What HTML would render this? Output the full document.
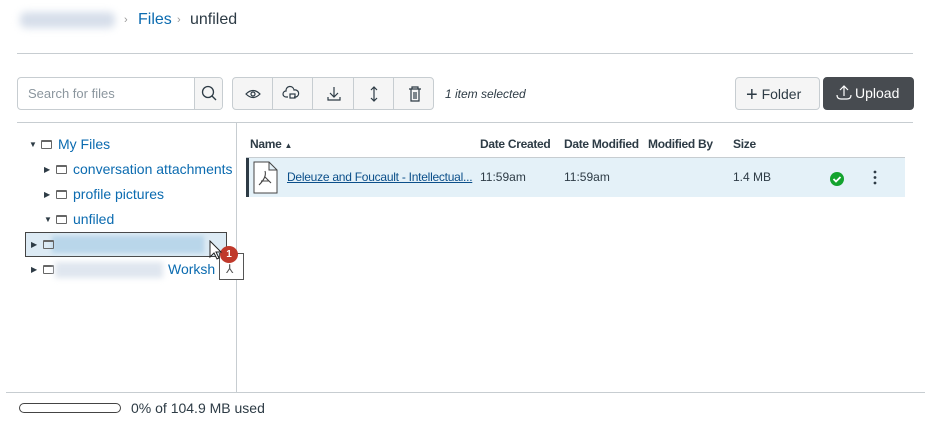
<!DOCTYPE html>
<html><head><style>
*{box-sizing:border-box;margin:0;padding:0}
body{width:929px;height:428px;background:#fff;font-family:"Liberation Sans",sans-serif;color:#2d3b45;position:relative;overflow:hidden}
.a{position:absolute}
.blue{color:#0b6bb0}
.btn{position:absolute;top:77px;height:33px;border:1px solid #c7cdd1;border-radius:4px;background:#f5f5f5}
.hd{position:absolute;top:137px;font-size:12px;font-weight:bold;color:#2d3b45;letter-spacing:-0.3px}
.ti{position:absolute;font-size:14px;color:#0b6bb0;white-space:nowrap}
.tri{display:inline-block;font-size:8px;color:#2d3b45;width:10px;vertical-align:2px}
.fd{display:inline-block;width:11px;height:9px;border:1px solid #666;border-top-width:2px;border-radius:1px;margin-right:6px;vertical-align:0px;margin-left:2px}
</style></head><body>
<div class="a" style="left:20px;top:12px;width:95px;height:16px;background:#d6deea;filter:blur(4px);border-radius:6px"></div>
<div class="a" style="left:124px;top:14px;font-size:11px;color:#999">›</div>
<div class="a blue" style="left:138px;top:11px;font-size:16px">Files</div>
<div class="a" style="left:177px;top:14px;font-size:11px;color:#999">›</div>
<div class="a" style="left:190px;top:11px;font-size:16px;color:#2d3b45">unfiled</div>
<div class="a" style="left:17px;top:53px;width:896px;height:1px;background:#c7cdd1"></div>

<div class="a" style="left:17px;top:77px;width:206px;height:33px;border:1px solid #c7cdd1;border-radius:4px;overflow:hidden">
<div class="a" style="left:10px;top:8px;font-size:13px;color:#8b969e">Search for files</div>
<div class="a" style="left:176px;top:0;width:29px;height:31px;background:#f5f5f5;border-left:1px solid #c7cdd1">
<svg width="29" height="31"><circle cx="13" cy="14" r="5.5" fill="none" stroke="#2d3b45" stroke-width="1.3"/><line x1="17" y1="18" x2="21" y2="22" stroke="#2d3b45" stroke-width="1.3"/></svg></div></div>

<div class="btn" style="left:232px;width:202px;overflow:hidden">
<svg width="202" height="31" class="a" style="left:0;top:0">
<g stroke="#c7cdd1"><line x1="39.5" y1="0" x2="39.5" y2="31"/><line x1="79.5" y1="0" x2="79.5" y2="31"/><line x1="120.5" y1="0" x2="120.5" y2="31"/><line x1="160.5" y1="0" x2="160.5" y2="31"/></g>
<g fill="none" stroke="#2d3b45" stroke-width="1.2">
<path d="M13 16 Q20 9 27 16 Q20 23 13 16Z"/><circle cx="20" cy="16" r="2"/>
<path d="M55 19 h-2 a3 3 0 0 1 0-6 a4 4 0 0 1 8-1 a3 3 0 0 1 2 7 h-2"/><rect x="57" y="16" width="5" height="4"/>
<path d="M101 9 v10 M97 15 l4 4 4-4 M95 19 v3 h12 v-3"/>
<path d="M141 9 v14 M138 12 l3-3 3 3 M138 20 l3 3 3-3"/>
<path d="M176 11 h12 M179 11 v-2 h6 v2 M178 11 v12 h8 v-12 M181 14 v7 M183 14 v7"/>
</g></svg></div>
<div class="a" style="left:445px;top:87px;font-size:12px;font-style:italic;color:#2d3b45">1 item selected</div>

<div class="btn" style="left:735px;width:85px"><div class="a" style="left:10px;top:6px;font-size:14px;color:#2d3b45"><span style="font-size:20px;font-weight:300;vertical-align:-2px">+</span> Folder</div></div>
<div class="btn" style="left:823px;width:91px;background:#474b50;border-color:#474b50"><div class="a" style="left:12px;top:7px;font-size:14px;color:#fff">
<svg width="16" height="15" style="vertical-align:-2px;margin-right:3px"><path d="M8 1 v10 M4 5 l4-4 4 4 M1 10 q0 4 4 4 h6 q4 0 4-4" fill="none" stroke="#fff" stroke-width="1.2"/></svg>Upload</div></div>

<div class="a" style="left:17px;top:122px;width:896px;height:1px;background:#c7cdd1"></div>
<div class="a" style="left:236px;top:123px;width:1px;height:269px;background:#c7cdd1"></div>
<div class="a" style="left:6px;top:392px;width:919px;height:1px;background:#c7cdd1"></div>

<div class="ti" style="left:29px;top:136px"><span class="tri">▼</span><span class="fd"></span>My Files</div>
<div class="ti" style="left:44px;top:161px"><span class="tri">▶</span><span class="fd"></span>conversation attachments</div>
<div class="ti" style="left:44px;top:186px"><span class="tri">▶</span><span class="fd"></span>profile pictures</div>
<div class="ti" style="left:44px;top:211px"><span class="tri">▼</span><span class="fd"></span>unfiled</div>
<div class="a" style="left:25px;top:232px;width:202px;height:25px;border:1px solid #444;background:#dceaf4"></div>
<div class="a" style="left:52px;top:236px;width:152px;height:17px;background:#b9d6ea;filter:blur(2px)"></div>
<div class="ti" style="left:31px;top:236px"><span class="tri">▶</span><span class="fd"></span></div>
<div class="ti" style="left:31px;top:261px"><span class="tri">▶</span><span class="fd"></span></div>
<div class="a" style="left:55px;top:262px;width:108px;height:16px;background:#dfe6ef;filter:blur(3px)"></div>
<div class="ti" style="left:168px;top:261px">Worksh</div>
<div class="a" style="left:219px;top:253px;width:25px;height:27px;border:1px solid #555;background:#fff"><div class="a" style="left:6px;top:8px;font-size:12px;color:#555">⅄</div></div>
<div class="a" style="left:220px;top:246px;width:18px;height:17px;border-radius:50%;background:#c0392b;color:#fff;font-size:10px;font-weight:bold;text-align:center;line-height:17px">1</div>
<svg class="a" style="left:209px;top:240px" width="14" height="22"><path d="M1 1 v16 l4-4 3 6 2-1 -3-6 h5z" fill="#fff" stroke="#222"/></svg>

<div class="hd" style="left:250px">Name <span style="font-size:8px">▲</span></div>
<div class="hd" style="left:480px">Date Created</div>
<div class="hd" style="left:564px">Date Modified</div>
<div class="hd" style="left:648px">Modified By</div>
<div class="hd" style="left:733px">Size</div>
<div class="a" style="left:246px;top:157px;width:659px;height:1px;background:#c7cdd1"></div>
<div class="a" style="left:246px;top:158px;width:659px;height:39px;background:#e4f1f8;border-left:3px solid #2d3b45"></div>
<svg class="a" style="left:253px;top:161px" width="25" height="33"><path d="M1 1 h15 l8 8 v23 h-23z M16 1 v8 h8" fill="#fff" stroke="#444"/><path d="M12 10 q2 6 -6 14 M12 16 l6 6 M8 20 h8" fill="none" stroke="#444" stroke-width="1.1"/></svg>
<div class="a" style="left:287px;top:170px;font-size:12px;color:#0b4f8a;text-decoration:underline;letter-spacing:-0.25px">Deleuze and Foucault - Intellectual...</div>
<div class="a" style="left:480px;top:170px;font-size:12px">11:59am</div>
<div class="a" style="left:564px;top:170px;font-size:12px">11:59am</div>
<div class="a" style="left:733px;top:170px;font-size:12px">1.4 MB</div>
<svg class="a" style="left:829px;top:171px" width="16" height="16"><circle cx="8" cy="8" r="7" fill="#13a32e"/><path d="M4.5 8 l2.5 2.5 4.5-4.5" fill="none" stroke="#fff" stroke-width="1.8"/></svg>
<svg class="a" style="left:872px;top:170px" width="6" height="16"><circle cx="3" cy="2" r="1.4" fill="#2d3b45"/><circle cx="3" cy="7.5" r="1.4" fill="#2d3b45"/><circle cx="3" cy="13" r="1.4" fill="#2d3b45"/></svg>

<div class="a" style="left:19px;top:403px;width:102px;height:10px;border:1px solid #444;border-radius:5px"></div>
<div class="a" style="left:131px;top:400px;font-size:14px">0% of 104.9 MB used</div>
</body></html>
